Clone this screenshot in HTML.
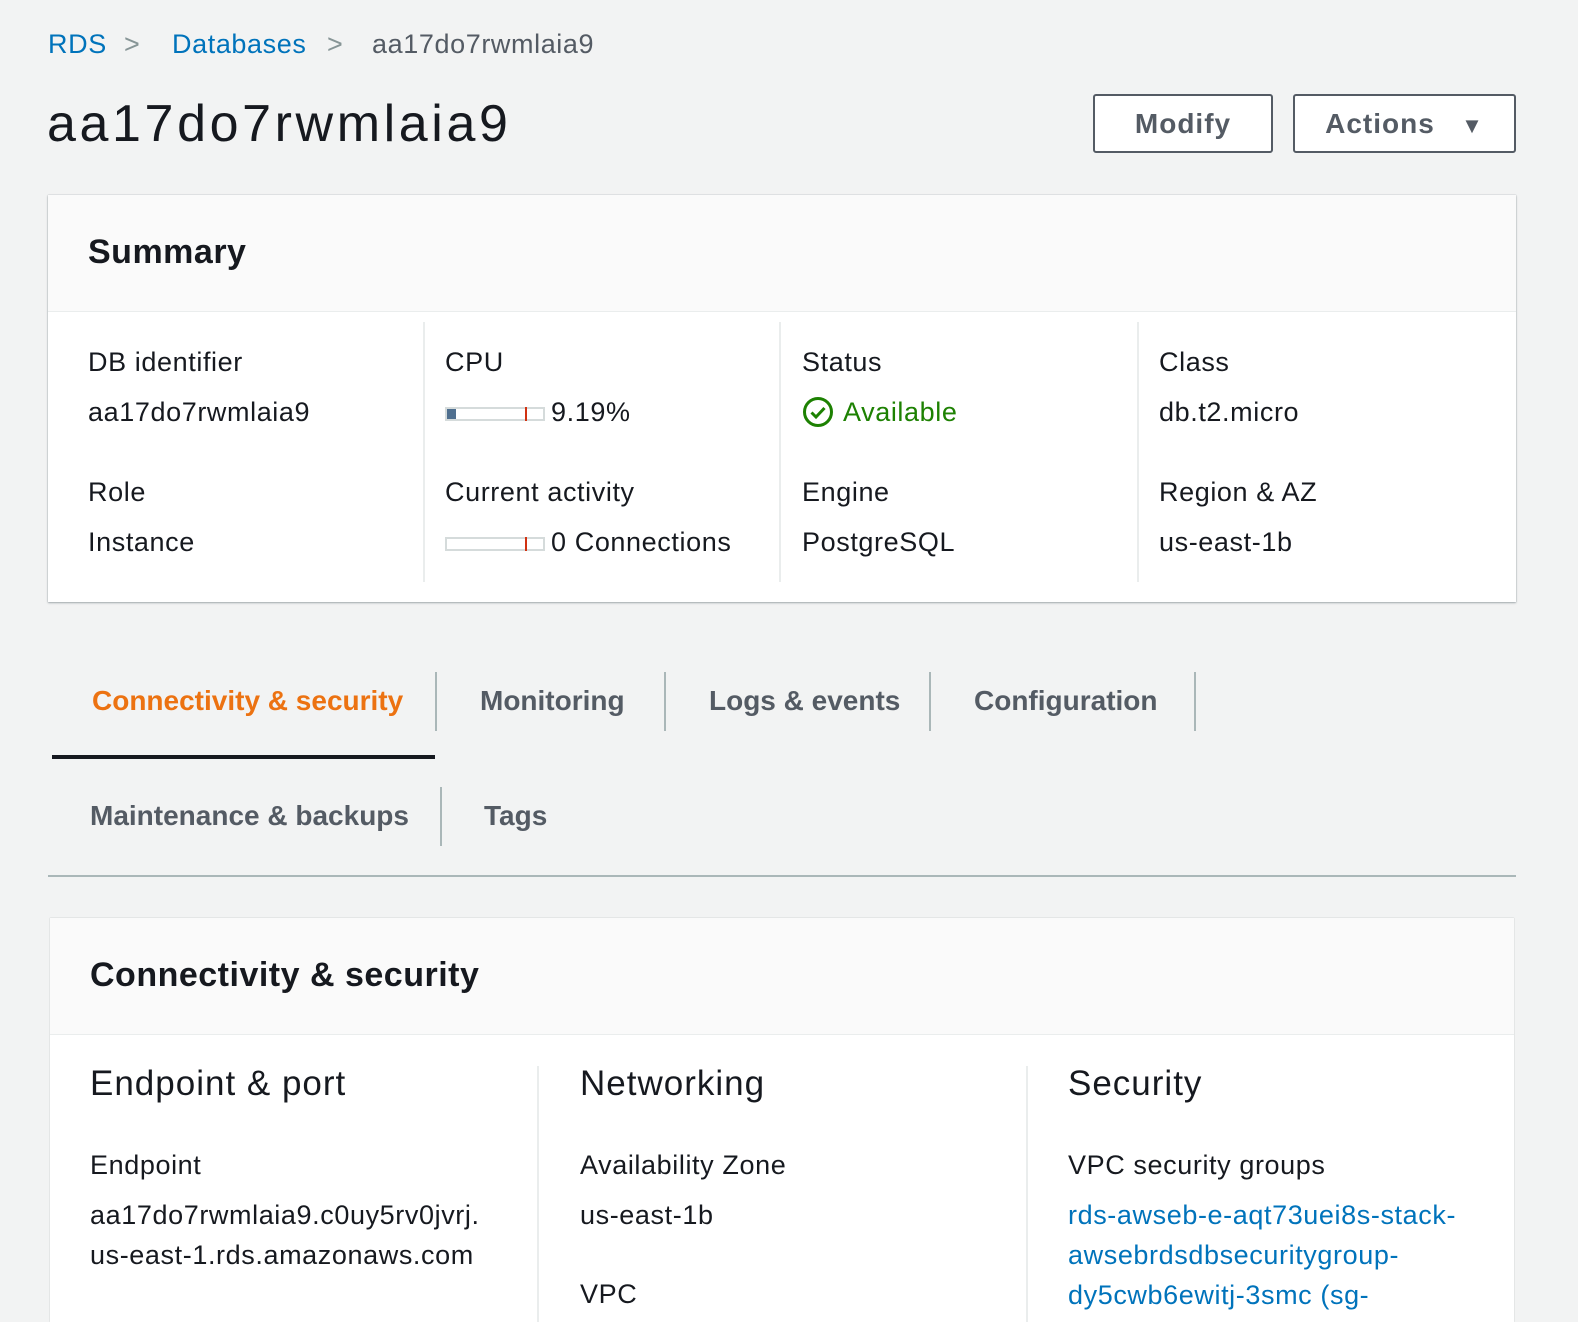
<!DOCTYPE html>
<html style="overflow:hidden"><head><style>
html,body{overflow:hidden}
body{margin:0;width:1578px;height:1322px;background:#f2f3f3;font-family:"Liberation Sans",sans-serif;color:#16191f;position:relative}
.a{position:absolute;white-space:nowrap}
.t{font-size:27px;line-height:32px;letter-spacing:0.6px}
.link{color:#0073bb}
.btn{position:absolute;border:2px solid #545b64;border-radius:3px;background:#fff;color:#545b64;font-weight:bold;font-size:28px;text-align:center;box-sizing:border-box;letter-spacing:1px}
.card{position:absolute;background:#fff;box-shadow:0 1px 2px rgba(0,28,36,.3),0 0 1px rgba(0,28,36,.3)}
.hd{position:absolute;left:0;right:0;top:0;background:#fafafa;border-bottom:1px solid #eaeded}
.vd{position:absolute;width:2px;background:#eaeded}
.tab{position:absolute;font-size:28px;font-weight:bold;color:#545b64;white-space:nowrap}
.td{position:absolute;width:2px;background:#aab7b8}
.bar{position:absolute;width:96px;height:10px;border:2px solid #d5dbdb;background:#fff}
.h3{font-size:35px;letter-spacing:1px}
</style></head><body>
<div class="a t" style="left:48px;top:28px"><span class="link">RDS</span></div>
<div class="a t" style="left:124px;top:28px;color:#879596">&gt;</div>
<div class="a t link" style="left:172px;top:28px">Databases</div>
<div class="a t" style="left:327px;top:28px;color:#879596">&gt;</div>
<div class="a t" style="left:372px;top:28px;color:#545b64">aa17do7rwmlaia9</div>
<div class="a" style="left:47px;top:94px;font-size:52px;line-height:60px;letter-spacing:3.6px">aa17do7rwmlaia9</div>
<div class="btn" style="left:1093px;top:94px;width:180px;height:59px;line-height:55px">Modify</div>
<div class="btn" style="left:1293px;top:94px;width:223px;height:59px;line-height:55px">Actions &nbsp;&nbsp;<span style="font-size:22px">▼</span></div>

<div class="card" style="left:48px;top:195px;width:1468px;height:407px">
<div class="hd" style="height:116px"></div>
<div class="a" style="left:40px;top:38px;font-size:34px;font-weight:bold;letter-spacing:0.5px">Summary</div>
<div class="vd" style="left:375px;top:127px;height:260px"></div>
<div class="vd" style="left:731px;top:127px;height:260px"></div>
<div class="vd" style="left:1089px;top:127px;height:260px"></div>
<div class="a t" style="left:40px;top:151px">DB identifier</div>
<div class="a t" style="left:40px;top:201px">aa17do7rwmlaia9</div>
<div class="a t" style="left:40px;top:281px">Role</div>
<div class="a t" style="left:40px;top:331px">Instance</div>
<div class="a t" style="left:397px;top:151px">CPU</div>
<div class="bar" style="left:397px;top:212px"><div style="position:absolute;left:0;top:0;width:9px;height:10px;background:#4f6f8f"></div><div style="position:absolute;left:78px;top:-2px;width:2px;height:14px;background:#d13212"></div></div>
<div class="a t" style="left:503px;top:201px">9.19%</div>
<div class="a t" style="left:397px;top:281px">Current activity</div>
<div class="bar" style="left:397px;top:342px"><div style="position:absolute;left:78px;top:-2px;width:2px;height:14px;background:#d13212"></div></div>
<div class="a t" style="left:503px;top:331px">0 Connections</div>
<div class="a t" style="left:754px;top:151px">Status</div>
<svg class="a" style="left:754px;top:201px" width="32" height="32" viewBox="0 0 32 32"><circle cx="16" cy="16" r="13.5" fill="none" stroke="#1d8102" stroke-width="3"/><path d="M9.5 16.5l4.5 4.5 8.5-9" fill="none" stroke="#1d8102" stroke-width="3"/></svg>
<div class="a t" style="left:795px;top:201px;color:#1d8102">Available</div>
<div class="a t" style="left:754px;top:281px">Engine</div>
<div class="a t" style="left:754px;top:331px">PostgreSQL</div>
<div class="a t" style="left:1111px;top:151px">Class</div>
<div class="a t" style="left:1111px;top:201px">db.t2.micro</div>
<div class="a t" style="left:1111px;top:281px">Region &amp; AZ</div>
<div class="a t" style="left:1111px;top:331px">us-east-1b</div>
</div>

<div class="tab" style="left:92px;top:685px;color:#ec7211">Connectivity &amp; security</div>
<div style="position:absolute;left:52px;top:755px;width:383px;height:4px;background:#16191f"></div>
<div class="td" style="left:435px;top:672px;height:59px"></div>
<div class="tab" style="left:480px;top:685px">Monitoring</div>
<div class="td" style="left:664px;top:672px;height:59px"></div>
<div class="tab" style="left:709px;top:685px">Logs &amp; events</div>
<div class="td" style="left:929px;top:672px;height:59px"></div>
<div class="tab" style="left:974px;top:685px">Configuration</div>
<div class="td" style="left:1194px;top:672px;height:59px"></div>
<div class="tab" style="left:90px;top:800px">Maintenance &amp; backups</div>
<div class="td" style="left:440px;top:787px;height:59px"></div>
<div class="tab" style="left:484px;top:800px">Tags</div>
<div style="position:absolute;left:48px;top:875px;width:1468px;height:2px;background:#aab7b8"></div>

<div class="card" style="left:50px;top:918px;width:1464px;height:404px;box-shadow:0 0 1px rgba(0,28,36,.3)">
<div class="hd" style="height:116px"></div>
<div class="a" style="left:40px;top:38px;font-size:34px;font-weight:bold;letter-spacing:0.5px">Connectivity &amp; security</div>
<div class="vd" style="left:487px;top:148px;height:300px"></div>
<div class="vd" style="left:976px;top:148px;height:300px"></div>
<div class="a h3" style="left:40px;top:146px">Endpoint &amp; port</div>
<div class="a t" style="left:40px;top:231px">Endpoint</div>
<div class="a t" style="left:40px;top:281px">aa17do7rwmlaia9.c0uy5rv0jvrj.</div>
<div class="a t" style="left:40px;top:321px">us-east-1.rds.amazonaws.com</div>
<div class="a h3" style="left:530px;top:146px">Networking</div>
<div class="a t" style="left:530px;top:231px">Availability Zone</div>
<div class="a t" style="left:530px;top:281px">us-east-1b</div>
<div class="a t" style="left:530px;top:360px">VPC</div>
<div class="a h3" style="left:1018px;top:146px">Security</div>
<div class="a t" style="left:1018px;top:231px">VPC security groups</div>
<div class="a t link" style="left:1018px;top:281px">rds-awseb-e-aqt73uei8s-stack-</div>
<div class="a t link" style="left:1018px;top:321px">awsebrdsdbsecuritygroup-</div>
<div class="a t link" style="left:1018px;top:361px">dy5cwb6ewitj-3smc (sg-</div>
</div>
</body></html>
